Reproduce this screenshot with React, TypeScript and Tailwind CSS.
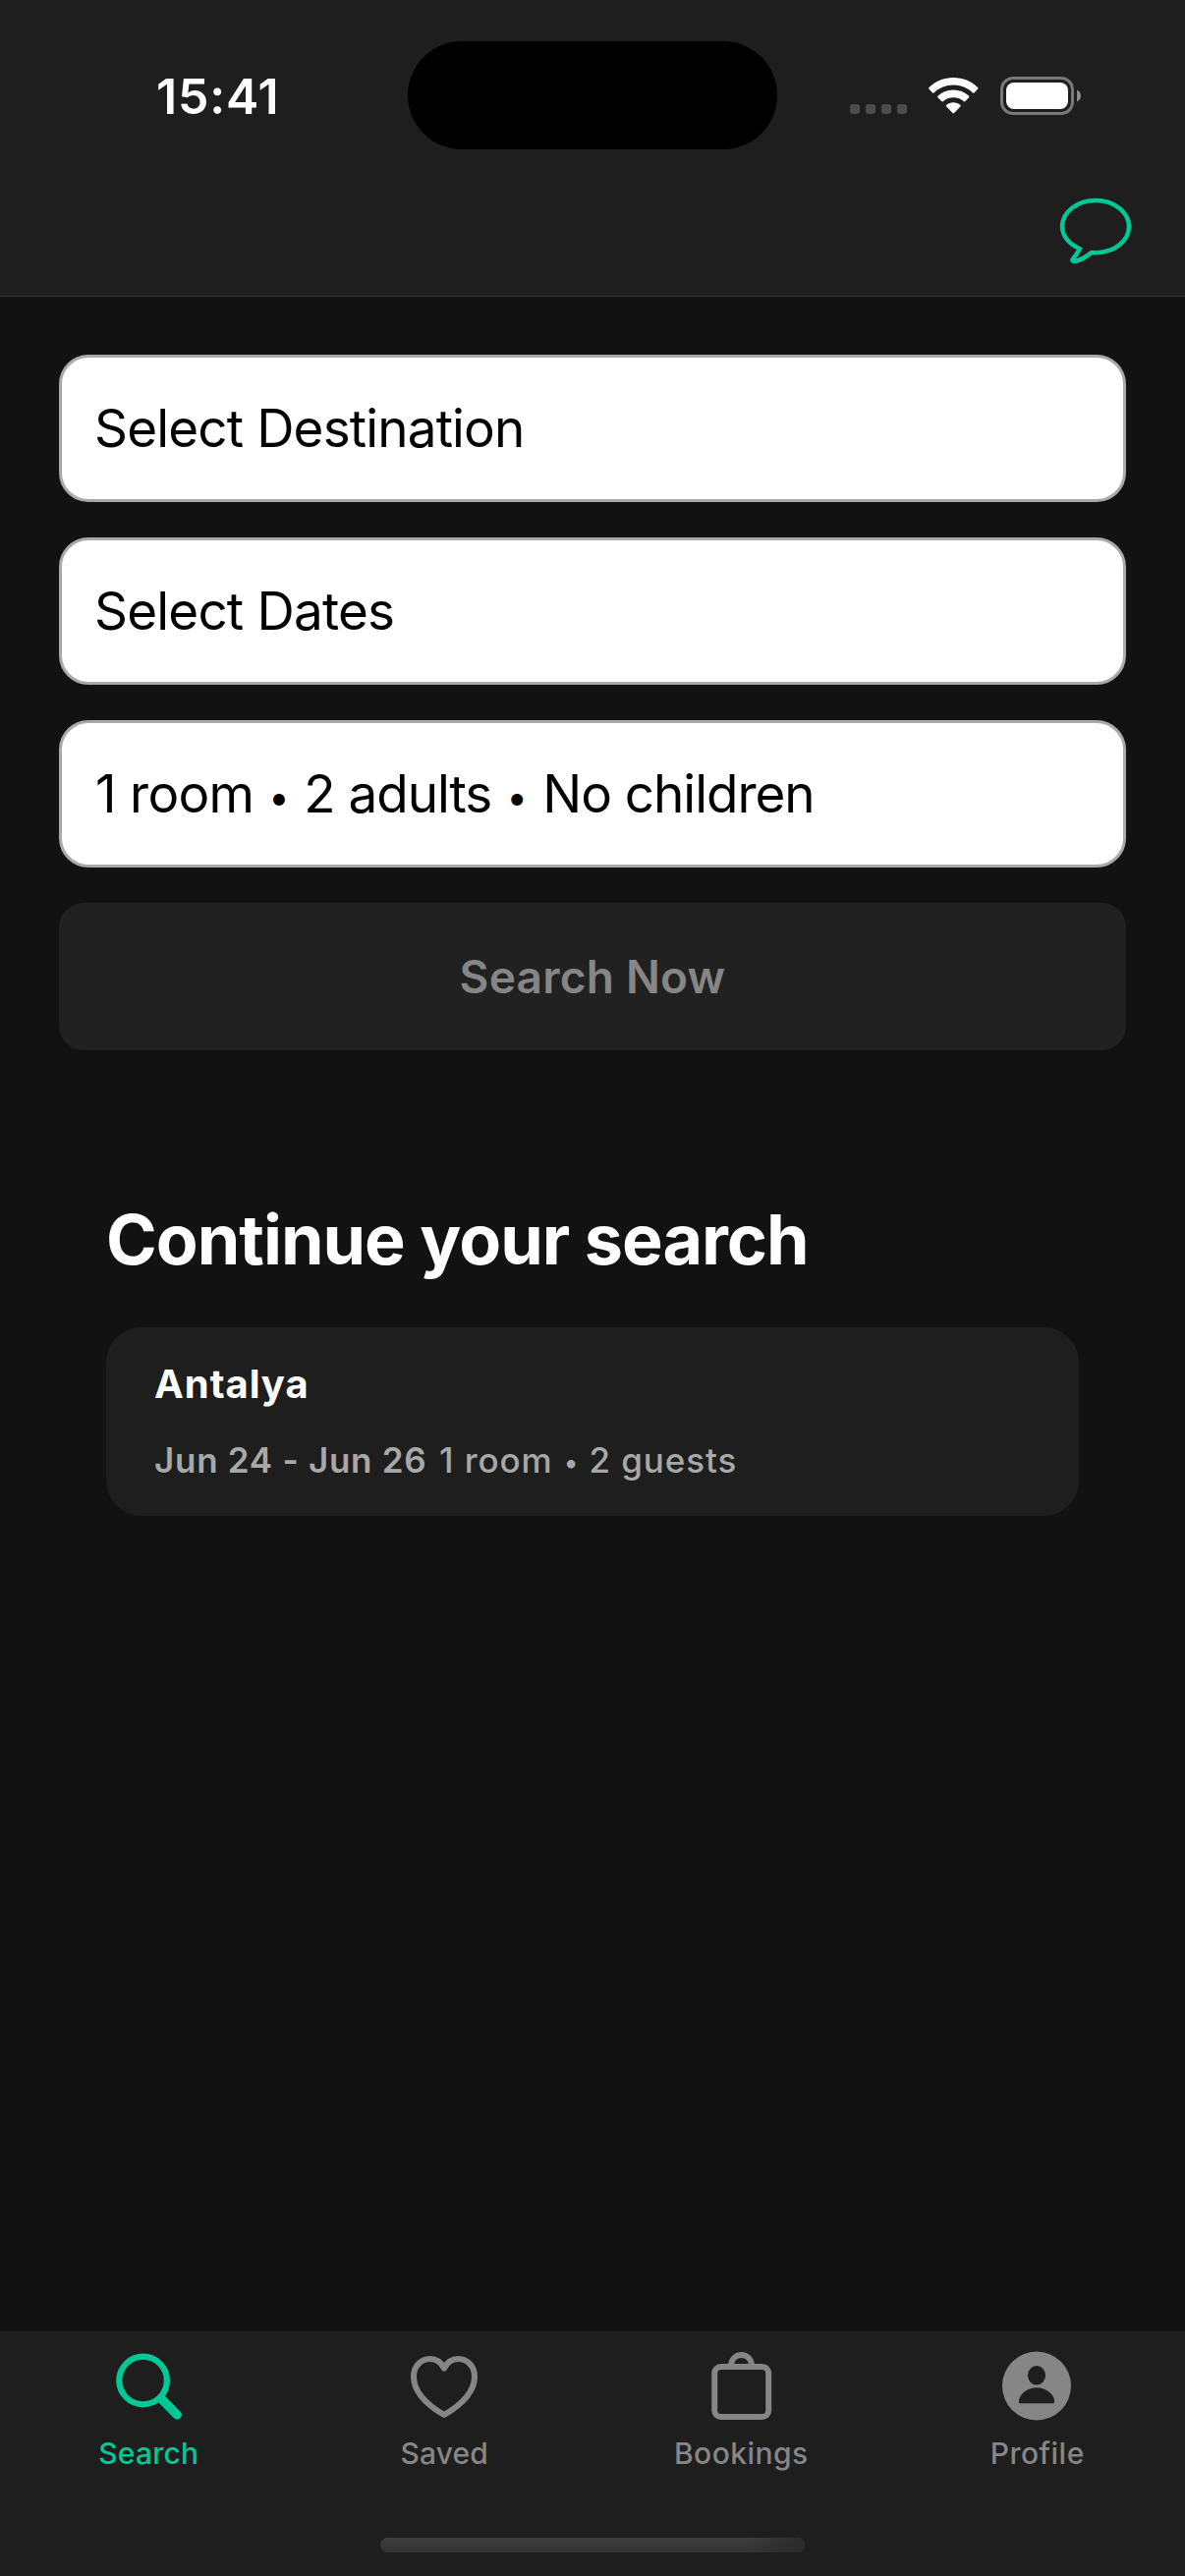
import React from "react";

function StatusBar() {
  return (
    <div className="flex h-[152px] pt-[42px]">
      <div className="w-[415px] pt-[26px] pl-[159px] text-[50px] leading-[60px] font-semibold tracking-[0.8px] text-white">
        15:41
      </div>
      <div className="h-[110px] w-[376px] rounded-[55px] bg-black" />
      <div className="flex flex-1 pl-[74px]">
        <div className="flex gap-[6px] pt-[64px]">
          {[0, 1, 2, 3].map((i) => (
            <span key={i} className="h-[10px] w-[10px] rounded-[3px] bg-[#4c4c4c]" />
          ))}
        </div>
        <svg className="mt-[36px] ml-[21px] h-[40px] w-[53px] shrink-0" viewBox="0 0 53 40" fill="#fff">
          <path d="M26.3 1c9.6 0 18.3 3.6 24.8 9.9.5.5.5 1.1.1 1.6l-3.7 3.9c-.4.5-1 .5-1.5 0C40.700 11.400 33.900 8.500 26.300 8.500S11.900 11.400 6.600 16.400c-.5.5-1.100.5-1.500 0l-3.700-3.900c-.4-.5-.4-1.100.1-1.600C8 4.600 16.700 1 26.300 1z" />
          <path d="M26.300 13.600c6 0 11.500 2.200 15.700 6 .5.5.5 1.100.1 1.600l-3.700 3.900c-.4.5-1 .5-1.500.1-2.800-2.600-6.500-4-10.600-4s-7.800 1.400-10.600 4c-.5.4-1.100.4-1.500-.1l-3.700-3.900c-.4-.5-.4-1.100.1-1.600 4.200-3.800 9.700-6 15.700-6z" />
          <path d="M26.300 26.300c2.600 0 5 .9 7 2.500.5.4.5 1.100.1 1.600l-6.300 6.700c-.5.500-1.100.500-1.600 0l-6.300-6.700c-.4-.5-.4-1.200.1-1.600 2-1.600 4.400-2.500 7-2.500z" />
        </svg>
        <svg className="mt-[36px] ml-[21px] h-[39px] w-[84px] shrink-0" viewBox="0 0 84 39">
          <rect x="1.500" y="1.500" width="72" height="36" rx="11.500" fill="none" stroke="#787878" strokeWidth="3" />
          <rect x="6" y="6" width="63" height="27" rx="8" fill="#fff" />
          <path d="M78 13.500c2.500 1 4 3.300 4 6s-1.500 5-4 6z" fill="#8c8c8c" />
        </svg>
      </div>
    </div>
  );
}

function ChatIcon() {
  return (
    <svg className="h-[72px] w-[76px]" viewBox="0 0 76 72" fill="none" stroke="#00c896" strokeWidth="4.500" strokeLinejoin="round">
      <path d="M38 5.900c18.700 0 34 11.900 34 26.700 0 14.900-15.300 26.600-34 26.600-1.400 0-2.800 0-4.200-.1C28 63.600 21.500 67.800 15.800 68c-1.500 0-1.900-1.200-1-2.300 2.500-3 5-6.400 7-10.500C11.500 50.500 4 42.400 4 32.600 4 17.800 19.300 5.900 38 5.900z" />
    </svg>
  );
}

function Field({ children }: { children: React.ReactNode }) {
  return (
    <div className="flex h-[150px] items-baseline rounded-[30px] border-[3px] border-[#a9a9a9] bg-white pl-[33px] text-[53px] leading-[144px] text-black">
      {children}
    </div>
  );
}

function SearchIcon() {
  return (
    <svg className="h-[76px] w-[76px]" viewBox="0 0 76 76" fill="none" stroke="#00c896" strokeLinecap="round">
      <circle cx="32.600" cy="34" r="24.300" strokeWidth="6.200" />
      <path d="M51 52.500L67.300 69" strokeWidth="9.300" />
    </svg>
  );
}

function HeartIcon() {
  return (
    <svg className="h-[76px] w-[76px]" viewBox="0 0 76 76" fill="none" stroke="#868686" strokeWidth="6" strokeLinejoin="round">
      <path d="M38 21.500C34.800 15.300 30 12 23.800 12 14.200 12 7 19.600 7 29.900 7 44 18.500 57.500 38 69c19.500-11.500 31-25 31-39.100C69 19.600 61.800 12 52.200 12 46 12 41.200 15.300 38 21.500z" />
    </svg>
  );
}

function BagIcon() {
  return (
    <svg className="h-[76px] w-[76px]" viewBox="0 0 76 76" fill="none" stroke="#868686">
      <rect x="11.200" y="20" width="55" height="51" rx="6.500" strokeWidth="6" />
      <path d="M28 20v-1.400C28 12.600 32.700 8 38.500 8s10.500 4.600 10.500 10.600V20" strokeWidth="5.800" />
    </svg>
  );
}

function ProfileIcon() {
  return (
    <svg className="h-[76px] w-[76px]" viewBox="0 0 76 76">
      <circle cx="38" cy="39.500" r="35" fill="#868686" />
      <ellipse cx="38" cy="28.800" rx="9.100" ry="9.700" fill="#1e1e1e" />
      <path d="M38 41.200c9.800 0 17.400 6.500 18.200 13.700.1 1.600-.6 2.400-1.900 2.400H21.800c-1.300 0-2-.8-1.900-2.400C20.700 47.700 28.200 41.200 38 41.200z" fill="#1e1e1e" />
    </svg>
  );
}

const tabs = [
  { label: "Search", icon: <SearchIcon />, style: "text-[#00c896] tracking-[0.2px] pl-[1px]" },
  { label: "Saved", icon: <HeartIcon />, style: "text-[#868686] tracking-[0.1px]" },
  { label: "Bookings", icon: <BagIcon />, style: "text-[#868686] tracking-[0.44px] pl-[1px]" },
  { label: "Profile", icon: <ProfileIcon />, style: "text-[#868686] tracking-[0.5px] pl-[1px]" },
];

export default function App() {
  return (
    <div className="flex h-[2622px] w-[1206px] flex-col overflow-hidden bg-[#121212] font-[Inter,sans-serif] whitespace-pre">
      <header className="h-[302px] shrink-0 border-b border-[#363636] bg-[#1e1e1e]">
        <StatusBar />
        <div className="mt-[46px] flex justify-end pr-[53px]">
          <ChatIcon />
        </div>
      </header>

      <main className="flex-1 px-[60px] pt-[59px]">
        <div className="flex flex-col gap-9">
          <Field>
            <span className="tracking-[-0.85px]">Select Destination</span>
          </Field>
          <Field>
            <span className="tracking-[-0.81px]">Select Dates</span>
          </Field>
          <Field>
            <span className="pl-[1px] tracking-[-0.7px]">1 room</span>
            <span className="relative top-[-2px] w-[51px] text-center text-[38px]">•</span>
            <span className="tracking-[-1.03px]">2 adults</span>
            <span className="relative top-[-2px] w-[52px] text-center text-[38px]">•</span>
            <span className="tracking-[-1.03px]">No children</span>
          </Field>
          <button className="h-[150px] rounded-[25px] bg-[#212121] text-center text-[46px] leading-[150px] font-semibold tracking-[0.22px] text-[#868686]">
            Search Now
          </button>
        </div>

        <section className="px-12 pt-[150px]">
          <h2 className="text-[70px] leading-[85px] font-bold tracking-[-1px] text-white">Continue your search</h2>
          <div className="mt-[47px] h-[192px] rounded-[36px] bg-[#1e1e1e] pt-[33px] pl-[49px]">
            <div className="text-[40px] leading-[49px] font-bold tracking-[0.95px] text-white">Antalya</div>
            <div className="mt-8 flex items-baseline text-[35px] leading-[42px] text-[#a8a8a8]">
              <span className="w-[290px] font-semibold tracking-[0.72px]">Jun 24 - Jun 26</span>
              <span className="font-medium tracking-[0.9px]">1 room</span>
              <span className="relative top-[-1px] w-[37px] text-center text-[27px]">•</span>
              <span className="font-medium tracking-[0.9px]">2 guests</span>
            </div>
          </div>
        </section>
      </main>

      <nav className="h-[249px] shrink-0 bg-[#1e1e1e] pt-4">
        <div className="grid grid-cols-4">
          {tabs.map((t) => (
            <div key={t.label} className="flex flex-col items-center">
              {t.icon}
              <span className={`mt-[14px] text-[30px] leading-9 font-medium ${t.style}`}>{t.label}</span>
            </div>
          ))}
        </div>
        <div className="mx-auto mt-[68px] h-[15px] w-[432px] overflow-hidden rounded-full bg-linear-to-b from-[#3e3e3e] to-[#333333]">
          <div className="ml-auto h-full w-[60px] bg-linear-to-r from-transparent to-[#2a2a2a]" />
        </div>
      </nav>
    </div>
  );
}
